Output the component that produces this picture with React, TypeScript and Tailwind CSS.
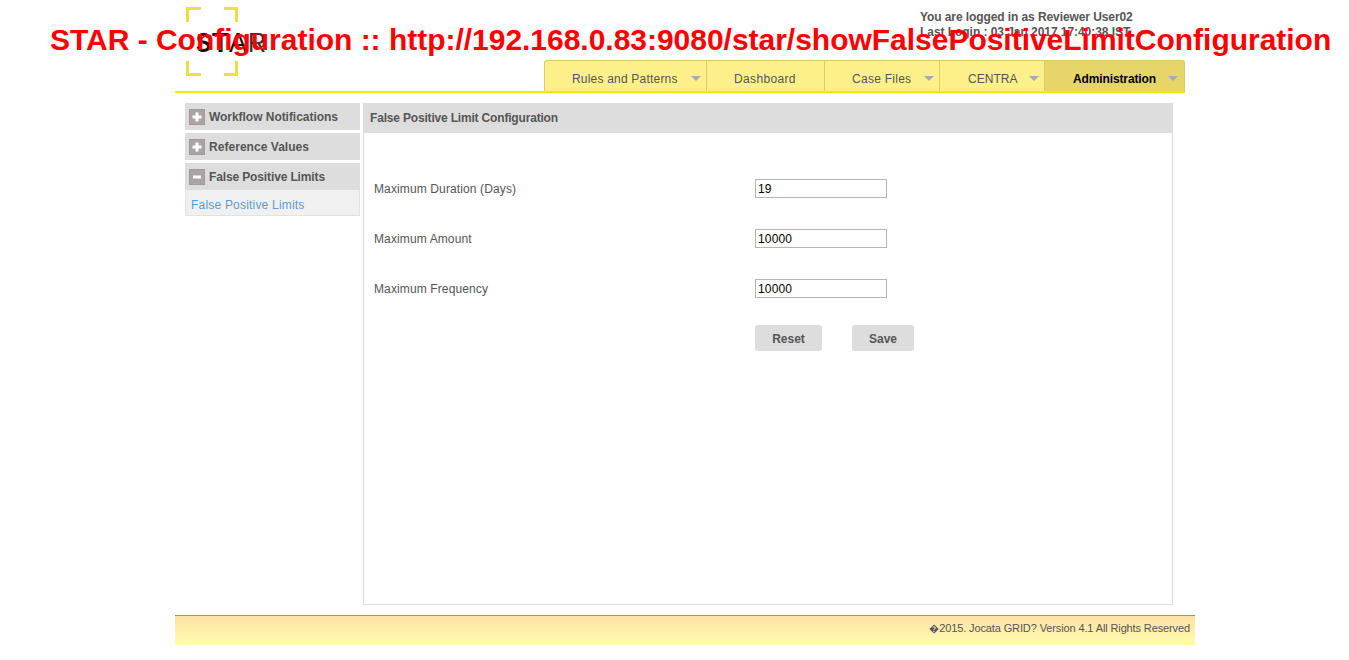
import { useState } from "react";

const menu = [
  { label: "Rules and Patterns", box: "w-[162px] pl-[27px] pr-[5px] rounded-tl-[3px] border-l bg-[#fdf08b]", text: "tracking-[0.2px]", arrow: true },
  { label: "Dashboard", box: "w-[118px] pl-[27px] border-l bg-[#fdf08b]", text: "tracking-[0.35px]", arrow: false },
  { label: "Case Files", box: "w-[115px] pl-[27px] pr-[5px] border-l bg-[#fdf08b]", text: "tracking-[0.27px]", arrow: true },
  { label: "CENTRA", box: "w-[105px] pl-[28px] pr-[5px] border-l bg-[#fdf08b]", text: "tracking-[0.05px]", arrow: true },
  { label: "Administration", box: "w-[141px] pl-[28px] pr-[6px] border-x rounded-tr-[3px] bg-[#e6d66a] font-bold text-black", text: "tracking-[-0.12px]", arrow: true },
];

const sections = [
  { label: "Workflow Notifications", text: "tracking-[-0.04px]" },
  { label: "Reference Values", text: "tracking-[0.04px]" },
];

function Caret({ className = "" }: { className?: string }) {
  return (
    <svg viewBox="0 0 10 5" className={`h-[5px] w-[10px] shrink-0 ${className}`}>
      <path d="M0 0H10L5 5Z" fill="#aaa" />
    </svg>
  );
}

function Logo() {
  return (
    <svg viewBox="0 0 90 72" className="ml-[11px] mt-[7px] h-[72px] w-[90px]">
      <path d="M1.5 15V1.5H15M38 1.5H50.5V15M50.5 54V67.5H38M15 67.5H1.5V54" fill="none" stroke="#eadf45" strokeWidth="3" />
      <g fontFamily="Liberation Sans, sans-serif" fontSize="28" fill="#111">
        <text x="10" y="44.7" fontWeight="bold" textLength="15" lengthAdjust="spacingAndGlyphs">S</text>
        <text x="26" y="44.7" fontWeight="bold" textLength="17" lengthAdjust="spacingAndGlyphs">T</text>
        <text x="43" y="44.7" textLength="18" lengthAdjust="spacingAndGlyphs">A</text>
        <text x="62" y="44.7" fill="#333" textLength="18" lengthAdjust="spacingAndGlyphs">R</text>
      </g>
    </svg>
  );
}

function SideItem({ label, text, open = false }: { label: string; text: string; open?: boolean }) {
  return (
    <div className="flex h-[27px] items-center bg-[#ddd] pl-1">
      <span className="mt-px flex size-4 items-center justify-center border border-[#a09a9a] bg-[#aaa4a4]">
        <svg viewBox="0 0 10 10" className="size-[10px] shrink-0">
          <path d={open ? "M1 5H9" : "M0.5 5H9.5M5 0.5V9.5"} stroke="#fff" strokeWidth="3" />
        </svg>
      </span>
      <span className={`ml-1 pt-[2px] font-bold ${text}`}>{label}</span>
    </div>
  );
}

function Field({ label, initial }: { label: string; initial: string }) {
  const [value, setValue] = useState(initial);
  return (
    <label className="flex h-[50px] items-center">
      <span className="w-[381px] pt-[3px] tracking-[0.12px]">{label}</span>
      <input
        className="h-[19px] w-[132px] border border-[#b5b5b5] bg-white px-[2px] pt-[2px] text-black tracking-[0.15px] outline-none"
        value={value}
        onChange={(e) => setValue(e.target.value)}
      />
    </label>
  );
}

export default function App() {
  return (
    <div className="relative h-[660px] w-full overflow-hidden bg-white font-['Liberation_Sans',Arial,sans-serif] text-[12px] leading-[15px] text-[#555]">
      <div className="ml-[175px] w-[1020px]">
        <header className="flex h-[93px] w-[1010px] border-b-2 border-[#f5e800]">
          <div className="w-[369px]">
            <Logo />
          </div>
          <div className="flex flex-1 flex-col justify-between">
            <div className="ml-[376px] mt-[10px] font-bold">
              <div className="whitespace-nowrap tracking-[-0.09px]">You are logged in as Reviewer User02</div>
              <div className="flex items-center whitespace-nowrap tracking-[-0.05px]">
                <span>Last Login : 03 Jan 2017 17:40:38 IST</span>
                <Caret className="ml-[10px]" />
              </div>
            </div>
            <nav className="flex h-[31px]">
              {menu.map((m) => (
                <a key={m.label} className={`flex items-center justify-between whitespace-nowrap border-t border-[#d9cb66] pt-[5px] ${m.box}`}>
                  <span className={`pt-px ${m.text}`}>{m.label}</span>
                  {m.arrow && <Caret />}
                </a>
              ))}
            </nav>
          </div>
        </header>

        <div className="mt-[10px] flex gap-[3px] pl-[10px]">
          <aside className="flex w-[175px] flex-col gap-[3px]">
            {sections.map((s) => (
              <SideItem key={s.label} label={s.label} text={s.text} />
            ))}
            <div>
              <SideItem label="False Positive Limits" text="tracking-[-0.13px]" open />
              <div className="h-[26px] border border-t-0 border-[#e3e3e3] bg-[#f0f0f0] pl-[5px] pt-[8px] tracking-[0.2px] text-[#5b9bd0]">
                False Positive Limits
              </div>
            </div>
          </aside>
          <main className="h-[502px] w-[810px] border border-t-0 border-[#ddd]">
            <h1 className="h-[30px] bg-[#ddd] pl-[6px] pt-[8px] font-bold tracking-[-0.18px]">False Positive Limit Configuration</h1>
            <form className="pl-[10px] pt-[30px]">
              <Field label="Maximum Duration (Days)" initial="19" />
              <Field label="Maximum Amount" initial="10000" />
              <Field label="Maximum Frequency" initial="10000" />
              <div className="ml-[381px] mt-[12px] flex gap-[30px] font-bold">
                <button type="reset" className="h-[26px] w-[67px] rounded-[3px] bg-[#ddd] pt-[2px]">Reset</button>
                <button type="button" className="h-[26px] w-[62px] rounded-[3px] bg-[#ddd] pt-[2px]">Save</button>
              </div>
            </form>
          </main>
        </div>

        <footer className="mt-[10px] h-[30px] border-t border-[#98986c] bg-linear-to-b from-[#ffe3a5] to-[#fffcb0] pr-[5px] pt-[5px] text-right text-[11px] tracking-[-0.12px]">
          <span className="text-[10px]">�</span>2015. Jocata GRID? Version 4.1 All Rights Reserved
        </footer>
      </div>

      <div className="absolute left-[50px] top-[20px] whitespace-nowrap text-[30px] font-bold leading-[40px] tracking-[-0.02px] text-[#f00]">
        STAR - Configuration :: http://192.168.0.83:9080/star/showFalsePositiveLimitConfiguration
      </div>
    </div>
  );
}
